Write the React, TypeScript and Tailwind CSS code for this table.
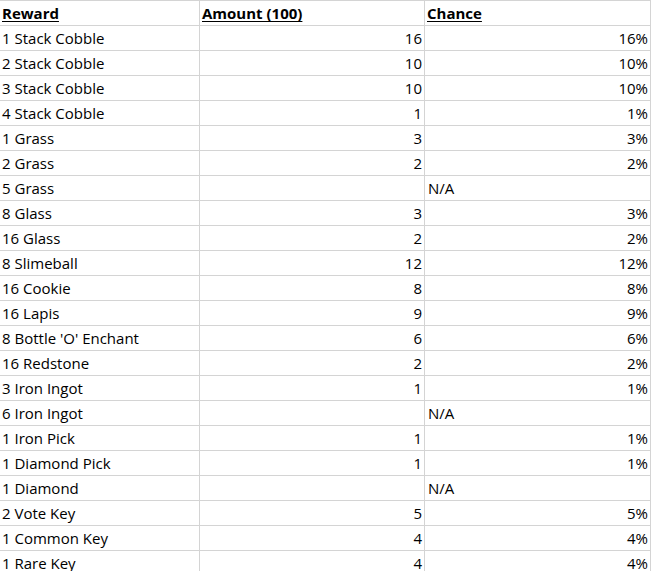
import React from "react";

const rows: [string, string, string][] = [
  ["1 Stack Cobble", "16", "16%"],
  ["2 Stack Cobble", "10", "10%"],
  ["3 Stack Cobble", "10", "10%"],
  ["4 Stack Cobble", "1", "1%"],
  ["1 Grass", "3", "3%"],
  ["2 Grass", "2", "2%"],
  ["5 Grass", "", "N/A"],
  ["8 Glass", "3", "3%"],
  ["16 Glass", "2", "2%"],
  ["8 Slimeball", "12", "12%"],
  ["16 Cookie", "8", "8%"],
  ["16 Lapis", "9", "9%"],
  ["8 Bottle 'O' Enchant", "6", "6%"],
  ["16 Redstone", "2", "2%"],
  ["3 Iron Ingot", "1", "1%"],
  ["6 Iron Ingot", "", "N/A"],
  ["1 Iron Pick", "1", "1%"],
  ["1 Diamond Pick", "1", "1%"],
  ["1 Diamond", "", "N/A"],
  ["2 Vote Key", "5", "5%"],
  ["1 Common Key", "4", "4%"],
  ["1 Rare Key", "4", "4%"],
];

export default function App() {
  return (
    <div
      className="w-[651px] h-[571px] overflow-hidden bg-white text-black text-[15px] leading-none"
      style={{ fontFamily: '"Open Sans", "Liberation Sans", sans-serif' }}
    >
      <div className="grid grid-cols-[200px_225px_226px] border-t border-[#d4d4d4]">
        {["Reward", "Amount (100)", "Chance"].map((h) => (
          <div
            key={h}
            className="h-[25px] border-r border-b border-[#d4d4d4] flex items-end pb-[4px] pl-[2px] font-bold underline underline-offset-2"
          >
            {h}
          </div>
        ))}
        {rows.map(([a, b, c], i) => {
          const na = c === "N/A";
          return (
            <React.Fragment key={i}>
              <div className="h-[25px] border-r border-b border-[#d4d4d4] flex items-end pb-[4px] pl-[2px]">
                {a}
              </div>
              <div className="h-[25px] border-r border-b border-[#d4d4d4] flex items-end justify-end pb-[4px] pr-[2px]">
                {b}
              </div>
              <div
                className={
                  na
                    ? "h-[25px] border-r border-b border-[#d4d4d4] flex items-end pb-[4px] pl-[3px]"
                    : "h-[25px] border-r border-b border-[#d4d4d4] flex items-end justify-end pb-[4px] pr-[2px]"
                }
              >
                {c}
              </div>
            </React.Fragment>
          );
        })}
      </div>
    </div>
  );
}
